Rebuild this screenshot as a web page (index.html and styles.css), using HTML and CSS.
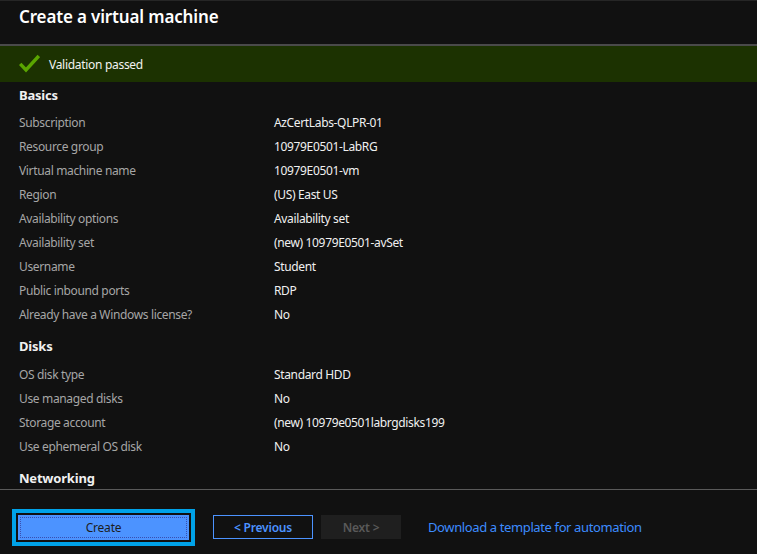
FILE: index.html
```html
<!DOCTYPE html>
<html>
<head>
<meta charset="utf-8">
<link rel="stylesheet" href="styles.css">
</head>
<body>
<div class="page">
  <header class="title-bar">
    <h1 class="title">Create a virtual machine</h1>
  </header>
  <div class="banner">
    <svg class="check" width="21" height="19" viewBox="0 0 21 19"><path d="M1.2 9.8 L7 16 L19.8 2" fill="none" stroke="#5aa500" stroke-width="3.4"/></svg>
    <span class="banner-text">Validation passed</span>
  </div>
  <main class="content">
    <h2 class="section">Basics</h2>
    <div class="row"><span class="label">Subscription</span><span class="value">AzCertLabs-QLPR-01</span></div>
    <div class="row"><span class="label">Resource group</span><span class="value">10979E0501-LabRG</span></div>
    <div class="row"><span class="label">Virtual machine name</span><span class="value">10979E0501-vm</span></div>
    <div class="row"><span class="label">Region</span><span class="value">(US) East US</span></div>
    <div class="row"><span class="label">Availability options</span><span class="value">Availability set</span></div>
    <div class="row"><span class="label">Availability set</span><span class="value">(new) 10979E0501-avSet</span></div>
    <div class="row"><span class="label">Username</span><span class="value">Student</span></div>
    <div class="row"><span class="label">Public inbound ports</span><span class="value">RDP</span></div>
    <div class="row"><span class="label">Already have a Windows license?</span><span class="value">No</span></div>
    <h2 class="section">Disks</h2>
    <div class="row"><span class="label">OS disk type</span><span class="value">Standard HDD</span></div>
    <div class="row"><span class="label">Use managed disks</span><span class="value">No</span></div>
    <div class="row"><span class="label">Storage account</span><span class="value">(new) 10979e0501labrgdisks199</span></div>
    <div class="row"><span class="label">Use ephemeral OS disk</span><span class="value">No</span></div>
    <h2 class="section">Networking</h2>
  </main>
  <footer class="footer">
    <div class="create-focus"><button class="btn-create"><span class="focus-ring">Create</span></button></div>
    <button class="btn-prev">&lt; Previous</button>
    <button class="btn-next">Next &gt;</button>
    <a class="link">Download a template for automation</a>
  </footer>
</div>
</body>
</html>
```
FILE: styles.css
```css
* { box-sizing: border-box; }
html, body { margin: 0; padding: 0; background: #111111; }
body {
  font-family: "Noto Sans", "Open Sans", sans-serif;
  color: #e6e6e6;
  width: 757px;
  height: 554px;
  overflow: hidden;
}
.page { display: flex; flex-direction: column; height: 554px; }
.title-bar {
  height: 46px;
  border-top: 1px solid #262626;
  border-bottom: 2px solid #4a4a4a;
  padding: 5px 0 0 19px;
}
.title {
  margin: 0;
  font-size: 17px;
  font-weight: 600;
  color: #ffffff;
  line-height: 22px;
  letter-spacing: -0.15px;
}
.banner {
  height: 36px;
  background: #1c3201;
  display: flex;
  align-items: center;
  padding-left: 19px;
}
.check { display: block; margin-right: 9px; margin-top: -1px; }
.banner-text { font-size: 12px; color: #f2f2f2; letter-spacing: -0.3px; }
.content {
  flex: 1;
  padding: 1px 0 0 19px;
  overflow: hidden;
  border-bottom: 1px solid #5a5a5a;
}
.section {
  margin: 0;
  font-size: 13px;
  font-weight: 700;
  color: #f0f0f0;
  height: 27px;
  padding-top: 2px;
  line-height: 20px;
  letter-spacing: -0.2px;
}
.row + .section { margin-top: 8px; height: 28px; }
.row {
  display: flex;
  height: 24px;
  padding-top: 2px;
  line-height: 22px;
  font-size: 12px;
  letter-spacing: -0.35px;
}
.label { width: 255px; color: #a6a6a6; }
.value { color: #f0f0f0; }
.footer {
  height: 64px;
  display: flex;
  align-items: center;
  padding: 10px 0 0 12px;
}
button { font-family: inherit; cursor: pointer; }
.create-focus {
  border: 4px solid #00a2e8;
  padding: 2px;
  background: #111;
  margin-right: 18px;
}
.btn-create {
  display: block;
  width: 171px;
  height: 25px;
  background: #4c93ff;
  border: none;
  padding: 2px;
}
.focus-ring {
  display: block;
  height: 100%;
  border: 1px dotted #3a4fb0;
  color: #1d1d1d;
  font-size: 12px;
  line-height: 19px;
  letter-spacing: -0.2px;
}
.btn-prev {
  width: 100px;
  height: 24px;
  border: 1px solid #4c93ff;
  background: transparent;
  color: #4c93ff;
  font-size: 12px;
  font-weight: 600;
  margin-right: 8px;
  padding: 0;
  letter-spacing: -0.2px;
}
.btn-next {
  width: 80px;
  height: 24px;
  border: none;
  background: #1f1f1f;
  color: #595959;
  font-size: 12px;
  font-weight: 600;
  padding: 0;
  margin-right: 27px;
  letter-spacing: -0.2px;
}
.link {
  color: #3d8cff;
  font-size: 13px;
  letter-spacing: -0.38px;
}
```
